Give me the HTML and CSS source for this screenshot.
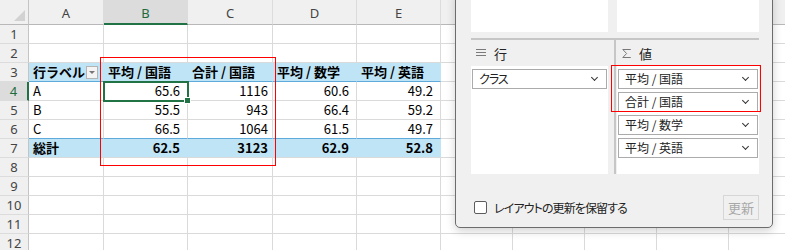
FILE: index.html
```html
<!DOCTYPE html>
<html lang="ja">
<head>
  <meta charset="UTF-8">
  <title>ピボットテーブル</title>
  <link rel="stylesheet" href="styles.css">
</head>
<body>
  <div class="sheet" id="sheet"></div>
  <div class="mark mark-sheet"></div>

  <div class="pane">
    <div class="pane-top">
      <div class="box"></div>
      <div class="box"></div>
    </div>
    <div class="pane-rule"></div>
    <div class="areas">
      <div class="area">
        <div class="area-title">
          <svg class="ico" width="10" height="8" viewBox="0 0 10 8"><path d="M0 .5h10M0 3.5h10M0 6.5h10" stroke="#7a7a7a" stroke-width="1"/></svg>
          行
        </div>
        <div class="box list">
          <div class="field"><span class="kana">クラス</span><span class="chev"></span></div>
        </div>
      </div>
      <div class="area area-values">
        <div class="area-title">
          <svg class="ico" width="9" height="9" viewBox="0 0 9 9"><path d="M8.5 1V.5H.8L4.6 4.5.8 8.5h7.7V8" fill="none" stroke="#777" stroke-width="1"/></svg>
          値
        </div>
        <div class="box list">
          <div class="field">平均 / 国語<span class="chev"></span></div>
          <div class="field">合計 / 国語<span class="chev"></span></div>
          <div class="field">平均 / 数学<span class="chev"></span></div>
          <div class="field">平均 / 英語<span class="chev"></span></div>
        </div>
      </div>
    </div>
    <div class="pane-foot">
      <label class="defer"><span class="check"></span>レイアウトの更新を保留する</label>
      <button class="update" disabled>更新</button>
    </div>
  </div>
  <div class="mark mark-pane"></div>

  <script>
    const cols = ['A', 'B', 'C', 'D', 'E', 'F', 'G', 'H', 'I', 'J'];
    const pivot = {
      3: ['行ラベル', '平均 / 国語', '合計 / 国語', '平均 / 数学', '平均 / 英語'],
      4: ['A', '65.6', '1116', '60.6', '49.2'],
      5: ['B', '55.5', '943', '66.4', '59.2'],
      6: ['C', '66.5', '1064', '61.5', '49.7'],
      7: ['総計', '62.5', '3123', '62.9', '52.8']
    };

    const sheet = document.getElementById('sheet');

    function cell(cls, text) {
      const div = document.createElement('div');
      div.className = cls;
      div.textContent = text || '';
      sheet.appendChild(div);
      return div;
    }

    cell('corner').innerHTML = '<span class="tri"></span>';
    cols.forEach((c, i) => cell(i === 1 ? 'hd on' : 'hd', c));

    for (let r = 1; r <= 12; r++) {
      cell(r === 4 ? 'rn on' : 'rn', String(r));
      cols.forEach((c, i) => {
        const row = pivot[r];
        const v = row && i < 5 ? row[i] : '';
        let cls = 'c';
        if (row && i < 5) {
          if (r === 3) cls += ' ph';
          if (r === 7) cls += ' pt';
          if (r === 6) cls += ' pb';
        }
        if (v && i > 0 && r > 3) cls += v.includes('.') ? ' num dec' : ' num';
        if (r === 4 && i === 1) cls += ' sel';
        const div = cell(cls, v);
        if (r === 3 && i === 0) div.innerHTML = '<span>' + v + '</span><span class="drop"></span>';
      });
    }
  </script>
</body>
</html>
```

FILE: styles.css
```css
body {
  margin: 0;
  width: 785px;
  height: 250px;
  overflow: hidden;
  position: relative;
  background: #fff;
  font-family: 'Noto Sans CJK JP', sans-serif;
  color: #000;
}

/* spreadsheet */

.sheet {
  display: grid;
  grid-template-columns: 29px 75px 84px 85px 84px 84px repeat(5, 72px);
  grid-template-rows: 25px repeat(12, 19px);
  font-size: 13px;
}

.sheet > div {
  box-sizing: border-box;
  border-right: 1px solid #dadada;
  border-bottom: 1px solid #dadada;
  line-height: 18px;
  white-space: nowrap;
  overflow: hidden;
}

.corner {
  background: #f0f0f0;
  border-right-color: #c4c4c4 !important;
  border-bottom-color: #b8b8b8 !important;
  display: flex;
  align-items: flex-end;
  justify-content: flex-end;
  padding: 0 3px 3px 0;
}

.tri {
  width: 0;
  height: 0;
  border-left: 11px solid transparent;
  border-bottom: 11px solid #d2d2d2;
}

.hd {
  background: #f0f0f0;
  border-bottom-color: #b8b8b8 !important;
  border-right-color: #dcdcdc !important;
  text-align: center;
  line-height: 27px !important;
  font-family: 'Noto Sans', sans-serif;
  color: #444;
}

.hd.on {
  background: #dcdcdc;
  color: #1e6b3e;
  border-bottom: 2px solid #217346 !important;
}

.rn {
  background: #f0f0f0;
  border-right-color: #c4c4c4 !important;
  border-bottom-color: #dcdcdc !important;
  text-align: center;
  font-family: 'Noto Sans', sans-serif;
  color: #444;
}

.rn.on {
  background: #dcdcdc;
  color: #1e6b3e;
  border-right: 2px solid #217346 !important;
}

.c {
  padding: 0 4px;
}

.ph {
  background: #bfe4f6;
  border-right-color: #bfe4f6 !important;
  border-bottom-color: #5eaadb !important;
  font-weight: bold;
  display: flex;
  align-items: center;
  justify-content: space-between;
}

.pb {
  border-bottom-color: #5eaadb !important;
}

.pt {
  background: #bfe4f6;
  border-right-color: #bfe4f6 !important;
  font-weight: bold;
}

.num {
  text-align: right;
}

.num.dec {
  padding-right: 7px;
}

.sel {
  position: relative;
  z-index: 2;
  overflow: visible !important;
  outline: 2px solid #217346;
  outline-offset: -1px;
}

.sel::after {
  content: '';
  position: absolute;
  right: -4px;
  bottom: -4px;
  width: 5px;
  height: 5px;
  background: #217346;
  border: 1px solid #fff;
}

.drop {
  width: 12px;
  height: 13px;
  box-sizing: border-box;
  border: 1px solid #b4b4b4;
  background: #f4f4f4;
  margin-right: 1px;
  position: relative;
}

.drop::after {
  content: '';
  position: absolute;
  left: 2px;
  top: 4px;
  border-left: 3px solid transparent;
  border-right: 3px solid transparent;
  border-top: 3px solid #777;
}

/* annotation boxes */

.mark {
  position: absolute;
  border: 1px solid #f00;
  box-sizing: border-box;
  z-index: 5;
}

.mark-sheet {
  left: 100px;
  top: 57px;
  width: 176px;
  height: 109px;
}

.mark-pane {
  left: 611px;
  top: 65px;
  width: 150px;
  height: 47px;
}

/* field list pane */

.pane {
  position: absolute;
  left: 455px;
  top: -8px;
  width: 318px;
  height: 236px;
  box-sizing: border-box;
  padding: 0 13px 0 15px;
  background: #f0f0f0;
  border: 1px solid #6c6c6c;
  border-radius: 0 0 5px 5px;
  box-shadow: 0 3px 10px rgba(0, 0, 0, 0.18);
  z-index: 4;
  font-size: 12px;
  color: #222;
  font-feature-settings: 'palt';
}

.pane-top {
  display: grid;
  grid-template-columns: 137px 142px;
  justify-content: space-between;
  height: 39px;
}

.box {
  background: #fff;
}

.pane-rule {
  margin-top: 6px;
  height: 2px;
  background: #c6c6c6;
}

.areas {
  display: grid;
  grid-template-columns: 137px 1fr;
  column-gap: 6px;
}

.area-values {
  border-left: 2px solid #c6c6c6;
  padding-left: 1px;
}

.area-title {
  height: 26px;
  display: flex;
  align-items: center;
  gap: 8px;
  padding-left: 5px;
  font-size: 13px;
}

.list {
  height: 108px;
  box-sizing: border-box;
  padding: 3px 1px;
  display: flex;
  flex-direction: column;
  gap: 3px;
}

.field {
  height: 20px;
  box-sizing: border-box;
  border: 1px solid #ababab;
  background: #fff;
  display: flex;
  align-items: center;
  justify-content: space-between;
  padding: 0 9px 0 6px;
  line-height: 18px;
}

.kana {
  letter-spacing: -1px;
}

.chev {
  width: 4px;
  height: 4px;
  border-right: 1.2px solid #333;
  border-bottom: 1.2px solid #333;
  transform: translateY(-2px) rotate(45deg);
}

.pane-foot {
  margin-top: 21px;
  height: 25px;
  display: flex;
  align-items: center;
  justify-content: space-between;
}

.defer {
  display: flex;
  align-items: center;
  gap: 7px;
  margin-left: 3px;
  font-size: 12px;
  letter-spacing: -0.9px;
  color: #222;
}

.check {
  width: 13px;
  height: 13px;
  box-sizing: border-box;
  border: 1px solid #5c5c5c;
  border-radius: 2px;
  background: #fff;
}

.update {
  width: 36px;
  height: 25px;
  padding: 0;
  border: 1px solid #d6d6d6;
  background: #f0f0f0;
  color: #a8a8a8;
  font-family: 'Noto Sans CJK JP', sans-serif;
  font-size: 13px;
}
```
